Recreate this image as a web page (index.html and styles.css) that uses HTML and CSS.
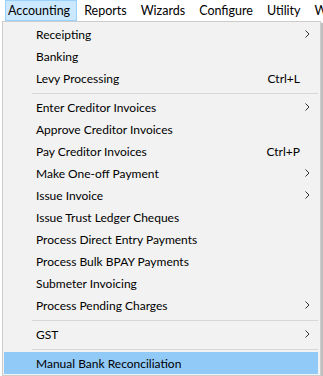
FILE: index.html
```html
<html>
<head>
<title>Accounting menu</title>
<link rel="stylesheet" href="styles.css">
</head>
<body>
<div class="menubar">
  <span class="top active">Accounting</span>
  <span class="top">Reports</span>
  <span class="top">Wizards</span>
  <span class="top">Configure</span>
  <span class="top">Utility</span>
  <span class="top">Window</span>
</div>
<div class="dropdown">
  <div class="item"><span class="label">Receipting</span><span class="key"></span><span class="sub"><svg width="5" height="8" viewBox="0 0 5 8"><path d="M0.5 0.5 L4 4 L0.5 7.5" fill="none" stroke="#333" stroke-width="1"/></svg></span></div>
  <div class="item"><span class="label">Banking</span><span class="key"></span><span class="sub"></span></div>
  <div class="item"><span class="label">Levy Processing</span><span class="key">Ctrl+L</span><span class="sub"></span></div>
  <div class="sep"></div>
  <div class="item"><span class="label">Enter Creditor Invoices</span><span class="key"></span><span class="sub"><svg width="5" height="8" viewBox="0 0 5 8"><path d="M0.5 0.5 L4 4 L0.5 7.5" fill="none" stroke="#333" stroke-width="1"/></svg></span></div>
  <div class="item"><span class="label">Approve Creditor Invoices</span><span class="key"></span><span class="sub"></span></div>
  <div class="item"><span class="label">Pay Creditor Invoices</span><span class="key">Ctrl+P</span><span class="sub"></span></div>
  <div class="item"><span class="label">Make One-off Payment</span><span class="key"></span><span class="sub"><svg width="5" height="8" viewBox="0 0 5 8"><path d="M0.5 0.5 L4 4 L0.5 7.5" fill="none" stroke="#333" stroke-width="1"/></svg></span></div>
  <div class="item"><span class="label">Issue Invoice</span><span class="key"></span><span class="sub"><svg width="5" height="8" viewBox="0 0 5 8"><path d="M0.5 0.5 L4 4 L0.5 7.5" fill="none" stroke="#333" stroke-width="1"/></svg></span></div>
  <div class="item"><span class="label">Issue Trust Ledger Cheques</span><span class="key"></span><span class="sub"></span></div>
  <div class="item"><span class="label">Process Direct Entry Payments</span><span class="key"></span><span class="sub"></span></div>
  <div class="item"><span class="label">Process Bulk BPAY Payments</span><span class="key"></span><span class="sub"></span></div>
  <div class="item"><span class="label">Submeter Invoicing</span><span class="key"></span><span class="sub"></span></div>
  <div class="item"><span class="label">Process Pending Charges</span><span class="key"></span><span class="sub"><svg width="5" height="8" viewBox="0 0 5 8"><path d="M0.5 0.5 L4 4 L0.5 7.5" fill="none" stroke="#333" stroke-width="1"/></svg></span></div>
  <div class="sep"></div>
  <div class="item"><span class="label">GST</span><span class="key"></span><span class="sub"><svg width="5" height="8" viewBox="0 0 5 8"><path d="M0.5 0.5 L4 4 L0.5 7.5" fill="none" stroke="#333" stroke-width="1"/></svg></span></div>
  <div class="sep"></div>
  <div class="item hot"><span class="label">Manual Bank Reconciliation</span><span class="key"></span><span class="sub"></span></div>
</div>
</body>
</html>
```

FILE: styles.css
```css
body { margin:0; background:#FFF; color:#000; font-family:Lato, "Liberation Sans", sans-serif; font-size:12px; overflow:hidden; }

.menubar { display:flex; height:21px; white-space:nowrap; font-size:12.5px; overflow:hidden; }
.top { display:flex; align-items:center; padding:0 6px; border:1px solid transparent; box-sizing:border-box; height:21px; flex-shrink:0; }
.top.active { margin-left:5px; padding-left:2px; background:#CCE8FF; border-color:#99D1FF; }

.dropdown { margin-left:2px; width:319px; box-sizing:border-box; border:1px solid #CCC; background:#F2F2F2; padding:1px 2px 1px 1px; box-shadow:2px 2px 1px rgba(0,0,0,0.25); }
.item { display:flex; align-items:center; height:22px; padding-left:32px; }
.item.hot { background:#91C9F7; }
.label { flex:1; }
.key { text-align:right; }
.sub { width:18px; display:flex; align-items:center; padding-left:5px; box-sizing:border-box; }
.sep { height:1px; background:#D7D7D7; margin:4px 0 2px 28px; }
```
